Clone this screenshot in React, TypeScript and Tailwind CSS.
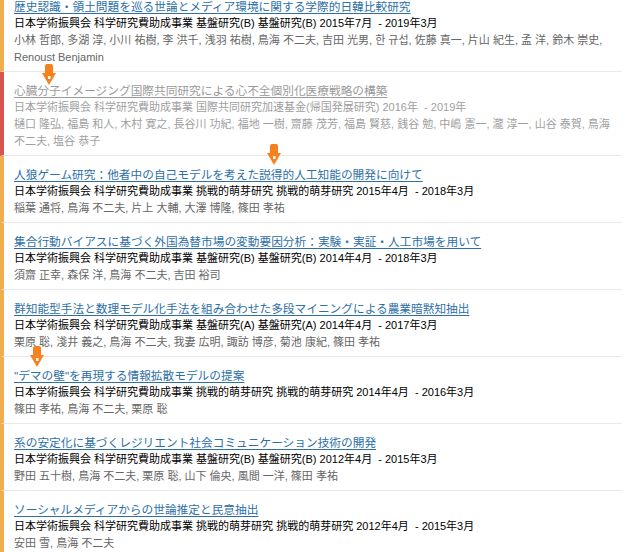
import React from 'react';

interface Project {
  title: string;
  info: string;
  authors: string;
  inactive?: boolean;
}

const PROJECTS: Project[] = [
  {
    title: '歴史認識・領土問題を巡る世論とメディア環境に関する学際的日韓比較研究',
    info: '日本学術振興会 科学研究費助成事業 基盤研究(B) 基盤研究(B) 2015年7月  - 2019年3月',
    authors:
      '小林 哲郎, 多湖 淳, 小川 祐樹, 李 洪千, 浅羽 祐樹, 鳥海 不二夫, 吉田 光男, 한 규섭, 佐藤 真一, 片山 紀生, 孟 洋, 鈴木 崇史, Renoust Benjamin',
  },
  {
    title: '心臓分子イメージング国際共同研究による心不全個別化医療戦略の構築',
    info: '日本学術振興会 科学研究費助成事業 国際共同研究加速基金(帰国発展研究) 2016年  - 2019年',
    authors:
      '樋口 隆弘, 福島 和人, 木村 寛之, 長谷川 功紀, 福地 一樹, 齋藤 茂芳, 福島 賢慈, 銭谷 勉, 中嶋 憲一, 瀧 淳一, 山谷 泰賀, 鳥海 不二夫, 塩谷 恭子',
    inactive: true,
  },
  {
    title: '人狼ゲーム研究：他者中の自己モデルを考えた説得的人工知能の開発に向けて',
    info: '日本学術振興会 科学研究費助成事業 挑戦的萌芽研究 挑戦的萌芽研究 2015年4月  - 2018年3月',
    authors: '稲葉 通将, 鳥海 不二夫, 片上 大輔, 大澤 博隆, 篠田 孝祐',
  },
  {
    title: '集合行動バイアスに基づく外国為替市場の変動要因分析：実験・実証・人工市場を用いて',
    info: '日本学術振興会 科学研究費助成事業 基盤研究(B) 基盤研究(B) 2014年4月  - 2018年3月',
    authors: '須齋 正幸, 森保 洋, 鳥海 不二夫, 吉田 裕司',
  },
  {
    title: '群知能型手法と数理モデル化手法を組み合わせた多段マイニングによる農業暗黙知抽出',
    info: '日本学術振興会 科学研究費助成事業 基盤研究(A) 基盤研究(A) 2014年4月  - 2017年3月',
    authors: '栗原 聡, 淺井 義之, 鳥海 不二夫, 我妻 広明, 諏訪 博彦, 菊池 康紀, 篠田 孝祐',
  },
  {
    title: '"デマの壁"を再現する情報拡散モデルの提案',
    info: '日本学術振興会 科学研究費助成事業 挑戦的萌芽研究 挑戦的萌芽研究 2014年4月  - 2016年3月',
    authors: '篠田 孝祐, 鳥海 不二夫, 栗原 聡',
  },
  {
    title: '系の安定化に基づくレジリエント社会コミュニケーション技術の開発',
    info: '日本学術振興会 科学研究費助成事業 基盤研究(B) 基盤研究(B) 2012年4月  - 2015年3月',
    authors: '野田 五十樹, 鳥海 不二夫, 栗原 聡, 山下 倫央, 風間 一洋, 篠田 孝祐',
  },
  {
    title: 'ソーシャルメディアからの世論推定と民意抽出',
    info: '日本学術振興会 科学研究費助成事業 挑戦的萌芽研究 挑戦的萌芽研究 2012年4月  - 2015年3月',
    authors: '安田 雪, 鳥海 不二夫',
  },
];

// orange drop marker that floats over the list
const Marker: React.FC<{ className: string }> = ({ className }) => (
  <svg className={`absolute ${className}`} width="14" height="22" viewBox="0 0 14 22">
    <rect x="3" y="0" width="8" height="12" rx="2" fill="#f5821f" />
    <path d="M0 9 H14 L7 21 Z" fill="#f5821f" strokeLinejoin="round" />
    <rect x="6" y="12" width="2.5" height="3" fill="#ffffff" />
  </svg>
);

const ProjectItem: React.FC<{ project: Project }> = ({ project }) => {
  const dim = project.inactive;
  return (
    <li
      className={`border-l-4 border-b border-b-[#e8e8e8] pl-[10px] pr-3 pt-[10px] pb-[5px] ${
        dim ? 'border-l-[#d9534f]' : 'border-l-[#f0ad4e]'
      }`}
    >
      <a
        href="#"
        className={`block text-[11.7px] leading-[17px] underline underline-offset-2 ${
          dim ? 'text-[#9a9a9a]' : 'text-[#2d6fa6]'
        }`}
      >
        {project.title}
      </a>
      <p className={`text-[11px] leading-[17px] whitespace-pre-wrap ${dim ? 'text-[#a0a0a0]' : 'text-black'}`}>
        {project.info}
      </p>
      <p className={`text-[11px] leading-[17px] ${dim ? 'text-[#a0a0a0]' : 'text-[#666666]'}`}>{project.authors}</p>
    </li>
  );
};

export default function App() {
  return (
    <div
      className="relative w-[630px] h-[552px] overflow-hidden bg-white"
      style={{ fontFamily: '"Liberation Sans", "Noto Sans CJK JP", sans-serif' }}
    >
      <ul className="-mt-[12px] w-[622px]">
        {PROJECTS.map((p) => (
          <ProjectItem key={p.title} project={p} />
        ))}
      </ul>

      <Marker className="left-[42px] top-[64px]" />
      <Marker className="left-[267px] top-[144px]" />
      <Marker className="left-[30px] top-[346px]" />
    </div>
  );
}
